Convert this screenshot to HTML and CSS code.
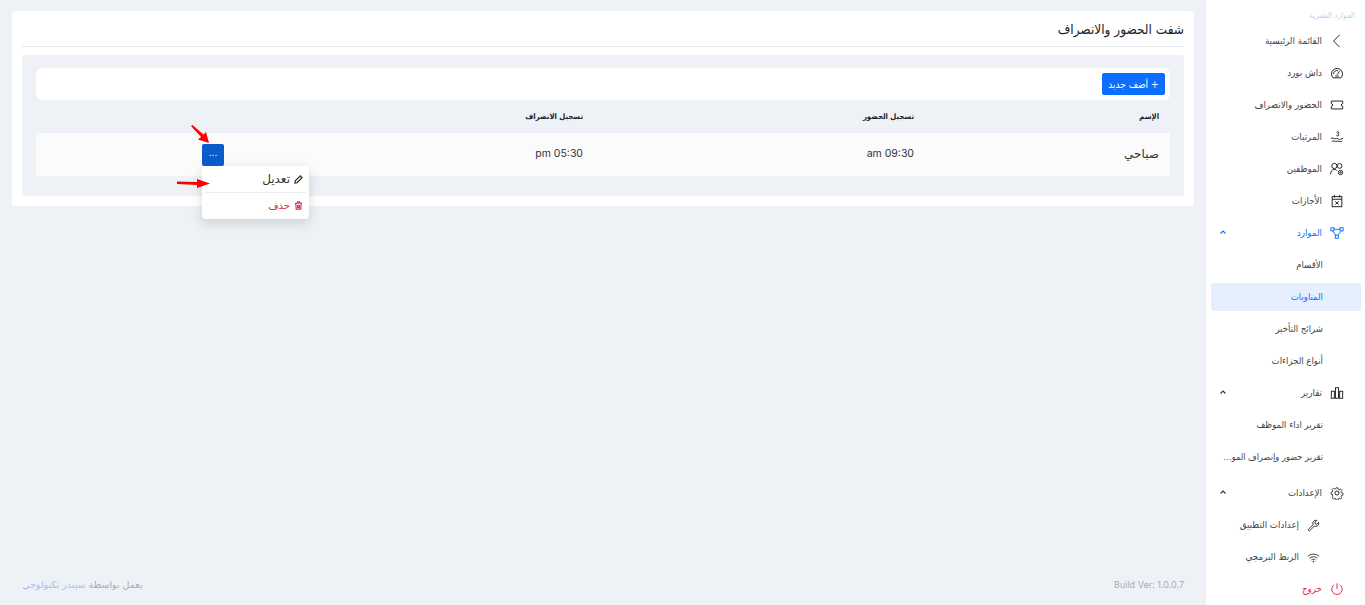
FILE: index.html
```html
<!DOCTYPE html>
<html lang="ar" dir="rtl">
<head>
  <meta charset="UTF-8" />
  <title>شفت الحضور والانصراف</title>
  <link rel="stylesheet" href="styles.css">
</head>
<body>

<aside class="sidebar">
  <div class="side-title">الموارد البشرية</div>
  <nav class="side-nav">
    <a class="item">
      <svg class="ico" viewBox="0 0 16 16"><path d="M11 1 4 8l7 7"/></svg>
      <span>القائمة الرئيسية</span>
    </a>
    <a class="item">
      <svg class="ico" viewBox="0 0 16 16"><path d="M3.500 13.500a6.300 6.300 0 1 1 9 0z"/><path d="M8 10 11 6M4 9a4 4 0 0 1 5.500-3.500M6 11.500h4"/></svg>
      <span>داش بورد</span>
    </a>
    <a class="item">
      <svg class="ico" viewBox="0 0 16 16"><path d="M1.500 3.500h13v3a1.500 1.500 0 0 0 0 3v3h-13v-3a1.500 1.500 0 0 0 0-3z"/></svg>
      <span>الحضور والانصراف</span>
    </a>
    <a class="item">
      <svg class="ico" viewBox="0 0 16 16"><path d="M1 9.500c2-1 3 .5 4.500.5s2-1 3.500 0 2 1 3 .5l3-1M2 13c2-1 3 0 4.500 0s3-.5 4 0 2 .5 3.500-.5"/><path d="M7.500 2.500c1-1.200 3-.6 2.500.8-.3.8-1.500.9-1.500.9 1 0 2 .9 1.500 1.900-.6 1-2.300.9-2.800-.1"/></svg>
      <span>المرتبات</span>
    </a>
    <a class="item">
      <svg class="ico" viewBox="0 0 16 16"><circle cx="5" cy="4.500" r="3"/><circle cx="11" cy="4.500" r="2.700"/><path d="M.7 14c0-3 1.500-5.500 4.300-5.500 1.500 0 2.500.5 3 1.500"/><circle cx="12" cy="12" r="2.500"/><circle cx="12" cy="12" r=".8"/></svg>
      <span>الموظفين</span>
    </a>
    <a class="item">
      <svg class="ico" viewBox="0 0 16 16"><rect x="2.500" y="3" width="11" height="11.500"/><path d="M2.500 6h11M5 1v3M11 1v3M6 8.500l4 3.500M10 8.500l-4 3.500"/></svg>
      <span>الأجازات</span>
    </a>

    <a class="item is-open">
      <svg class="ico" viewBox="0 0 16 16"><rect x="1" y="2" width="3.500" height="3.500"/><rect x="11.500" y="2" width="3.500" height="3.500"/><rect x="6" y="10.500" width="3.500" height="3.500"/><path d="M4.500 3.700h7M3 5.500l3.500 5M13 5.500 9 10.500"/></svg>
      <span>الموارد</span>
      <svg class="caret" viewBox="0 0 10 10"><path d="M2.500 5.500 5 3l2.500 2.500"/></svg>
    </a>
    <a class="item sub">الأقسام</a>
    <a class="item sub is-active">المناوبات</a>
    <a class="item sub">شرائح التأخير</a>
    <a class="item sub">أنواع الجزاءات</a>

    <a class="item">
      <svg class="ico" viewBox="0 0 16 16"><rect x="1.500" y="6" width="3.500" height="8"/><rect x="6.200" y="2" width="3.500" height="12"/><rect x="11" y="6" width="3.500" height="8"/></svg>
      <span>تقارير</span>
      <svg class="caret" viewBox="0 0 10 10"><path d="M2.500 5.500 5 3l2.500 2.500"/></svg>
    </a>
    <a class="item sub">تقرير اداء الموظف</a>
    <a class="item sub"><span class="clip">تقرير حضور وإنصراف الموظفين</span></a>

    <a class="item group-gap">
      <svg class="ico" viewBox="0 0 16 16"><circle cx="8" cy="8" r="2.300"/><path d="M6.800 1.500h2.400l.4 1.900 1.300.6 1.700-1 1.600 1.800-1 1.500.5 1.400 1.800.5v2.500l-1.800.4-.5 1.300 1 1.700-1.700 1.600-1.600-1-1.300.5-.4 1.800H6.800l-.4-1.800-1.300-.5-1.600 1-1.800-1.600 1-1.700L2.200 10l-1.700-.4V7.100l1.700-.5.500-1.400-1-1.500 1.800-1.800 1.600 1 1.300-.6z" transform="translate(.8 .8) scale(.9)"/></svg>
      <span>الإعدادات</span>
      <svg class="caret" viewBox="0 0 10 10"><path d="M2.500 5.500 5 3l2.500 2.500"/></svg>
    </a>
    <a class="item sub-ico">
      <svg class="ico" viewBox="0 0 16 16"><path d="M2 12.500 7.500 7a3.800 3.800 0 0 1 4.500-5.300L9.800 4l.4 2 2 .4 2.200-2.100A3.800 3.800 0 0 1 9 8.700L3.500 14.200a1.100 1.100 0 0 1-1.500-1.700z"/></svg>
      <span>إعدادات التطبيق</span>
    </a>
    <a class="item sub-ico">
      <svg class="ico" viewBox="0 0 16 16"><path d="M1 6.500c4-3.500 10-3.500 14 0M3.200 8.800c3-2.300 6.600-2.300 9.600 0M5.500 11c1.500-1 3.500-1 5 0"/><circle cx="8" cy="13" r=".6"/></svg>
      <span>الربط البرمجي</span>
    </a>
    <a class="item is-logout">
      <svg class="ico" viewBox="0 0 16 16"><path d="M8 1.500V8M4.700 3.200a6 6 0 1 0 6.600 0"/></svg>
      <span>خروج</span>
    </a>
  </nav>
</aside>

<main class="content">
  <section class="card">
    <h1 class="card-title">شفت الحضور والانصراف</h1>
    <div class="panel">
      <div class="toolbar">
        <button class="btn-add">+ أضف جديد</button>
      </div>
      <table class="shifts">
        <colgroup>
          <col class="col-name"><col class="col-in"><col class="col-out"><col>
        </colgroup>
        <thead>
          <tr><th>الإسم</th><th>تسجيل الحضور</th><th>تسجيل الانصراف</th><th></th></tr>
        </thead>
        <tbody>
          <tr>
            <td>صباحي</td>
            <td class="time"><span dir="ltr">am 09:30</span></td>
            <td class="time"><span dir="ltr">pm 05:30</span></td>
            <td class="cell-actions">
              <div class="actions">
                <button class="btn-more">...</button>
                <!-- القائمة -->
                <div class="menu">
                  <a class="menu-item">
                    <svg viewBox="0 0 12 12"><path class="pen-a" d="M2 10l.5-2.500L8 2l2 2-5.500 5.500z"/><path class="pen-b" d="M7.200 2.800l2 2"/></svg>
                    <span>تعديل</span>
                  </a>
                  <a class="menu-item is-danger">
                    <svg viewBox="0 0 12 12"><path d="M2 3.500h8M3 3.500l.5 6.500h5L9 3.500M4.500 3.500 5 2h2l.5 1.500M5 6h2v2H5z"/></svg>
                    <span>حذف</span>
                  </a>
                </div>
                <!-- الأسهم -->
                <svg class="arrow arrow-top" viewBox="0 0 19 19"><path d="M0 1 1.500 0l11 9.500L15 7l3 11-11-3.500 3-2.500z"/></svg>
                <svg class="arrow arrow-side" viewBox="0 0 33 11"><path d="M0 3.500 20 4V1l13 4.500L20 10V7L0 6z"/></svg>
              </div>
            </td>
          </tr>
        </tbody>
      </table>
    </div>
  </section>

  <footer class="foot">
    <div class="build">Build Ver: 1.0.0.7</div>
    <div class="credit">يعمل بواسطة <a>سيبدر تكنولوجي</a></div>
  </footer>
</main>

</body>
</html>
```

FILE: styles.css
```css
* { box-sizing: border-box; }
html, body { height: 100%; }
body {
  margin: 0;
  height: 605px;
  overflow: hidden;
  display: flex;
  font-family: "DejaVu Sans", "Noto Sans", sans-serif;
  font-stretch: condensed;
  background: #eef2f6;
  color: #333;
}

/* Sidebar */
.sidebar {
  width: 159px;
  flex: none;
  background: #fff;
  padding: 9px 4px 0 5px;
}
.side-title { font-size: 8px; line-height: 14px; color: #c3d2e6; padding-right: 6px; margin-bottom: 2px; }
.side-nav { display: flex; flex-direction: column; }
.item {
  height: 32px;
  flex: none;
  display: flex;
  align-items: center;
  gap: 8px;
  padding-right: 17px;
  font-size: 9.7px;
  line-height: 14px;
  color: #444;
  white-space: nowrap;
}
.ico { width: 14px; height: 14px; flex: none; fill: none; stroke: #222; stroke-width: 1.1; }
.caret { width: 10px; height: 10px; margin-right: auto; margin-left: 7px; fill: none; stroke: #333; stroke-width: 1.1; }
.item.is-open, .item.is-open span { color: #0d6efd; }
.item.is-open .ico, .item.is-open .caret { stroke: #0d6efd; }
.sub { padding-right: 38px; font-size: 9.5px; }
.sub.is-active { height: 28px; margin: 2px 0; background: #e5effd; border-radius: 3px; color: #0d6efd; }
.sub-ico { padding-right: 41px; }
.sub-ico .ico { width: 13px; height: 13px; }
.clip { display: block; width: 104px; overflow: hidden; text-overflow: ellipsis; font-size: 9.2px; }
.group-gap { margin-top: 4px; }
.is-logout { color: #e0274f; }
.is-logout .ico { stroke: #e0274f; }

/* Main */
.content { flex: 1; display: flex; flex-direction: column; padding: 11px 12px 0 12px; }
.card { background: #fff; border-radius: 4px; padding: 8px 10px 10px; }
.card-title { margin: 0; height: 28px; font-size: 13.5px; font-weight: 400; line-height: 20px; color: #222; border-bottom: 1px solid #e6eaef; }
.panel { margin-top: 8px; background: #eef2f6; border-radius: 3px; padding: 13px 14px 20px; }
.toolbar { background: #fff; border-radius: 6px; height: 32px; padding: 5px 5px; }
.btn-add {
  display: block;
  height: 22px;
  padding: 0 6.5px;
  border: 0;
  border-radius: 2px;
  background: #0d6efd;
  color: #fff;
  font: condensed 10px "DejaVu Sans", sans-serif;
}
.shifts { width: 100%; border-collapse: collapse; table-layout: fixed; }
.col-name { width: 245px; }
.col-in { width: 331px; }
.col-out { width: 370px; }
.shifts th { height: 33px; padding: 0 11px 1px; text-align: right; font-size: 7.7px; font-weight: 700; color: #222; }
.shifts td { height: 43px; padding: 0 11px 2px; background: #fbfbfb; font-size: 12px; font-stretch: normal; color: #333; }
.shifts td.time { font-family: "Inter", "DejaVu Sans", sans-serif; font-size: 10.5px; }
.shifts td.cell-actions { padding: 0; }

.actions { position: relative; width: 22px; height: 22px; }
.btn-more {
  display: block;
  width: 22px;
  height: 22px;
  border: 0;
  border-radius: 2px;
  padding: 0 0 4px;
  background: #0b5ccb;
  color: #fff;
  font: 9px "DejaVu Sans", sans-serif;
}

/* Dropdown */
.menu {
  position: absolute;
  top: 22px;
  right: -85px;
  width: 107px;
  height: 53px;
  padding: 1px 3px 0;
  background: #fff;
  border-radius: 4px;
  box-shadow: 0 4px 12px rgba(40, 50, 70, 0.18);
  z-index: 5;
}
.menu-item { display: flex; align-items: center; gap: 3px; height: 26px; padding-right: 2px; font-size: 12px; font-stretch: normal; color: #333; border-bottom: 1px solid #eee; }
.menu-item svg { width: 11px; height: 11px; flex: none; fill: none; stroke: #333; stroke-width: 1.2; }
.pen-a { stroke: #222; }
.pen-b { stroke: #e08a20; }
.menu-item.is-danger { border-bottom: 0; font-size: 10px; color: #e0274f; }
.menu-item.is-danger svg { stroke: #e0274f; }

.arrow { position: absolute; fill: #f00; z-index: 6; }
.arrow-top { width: 19px; height: 19px; top: -19px; right: 14px; }
.arrow-side { width: 33px; height: 11px; top: 34px; right: 14px; }

/* Footer */
.foot { margin-top: auto; height: 28px; padding: 0 10px; display: flex; justify-content: space-between; font-size: 10px; line-height: 16px; color: #a8adb4; }
.build { direction: ltr; font-family: "Inter", sans-serif; font-size: 9px; }
.credit { font-stretch: normal; font-size: 9.5px; }
.credit a { color: #9cc2f5; }
```
